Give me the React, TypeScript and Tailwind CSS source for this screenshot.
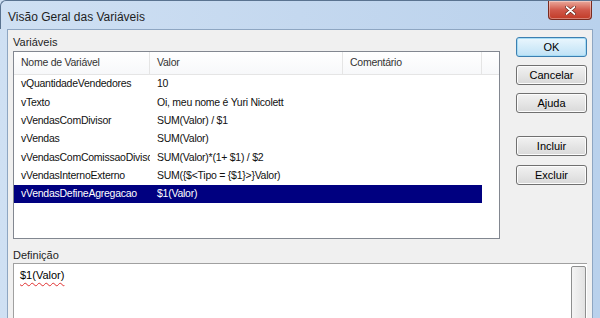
import React from "react";

const rows = [
  { name: "vQuantidadeVendedores", value: "10" },
  { name: "vTexto", value: "Oi, meu nome é Yuri Nicolett" },
  { name: "vVendasComDivisor", value: "SUM(Valor) / $1" },
  { name: "vVendas", value: "SUM(Valor)" },
  { name: "vVendasComComissaoDivisor", value: "SUM(Valor)*(1+ $1) / $2" },
  { name: "vVendasInternoExterno", value: "SUM({$<Tipo = {$1}>}Valor)" },
  { name: "vVendasDefineAgregacao", value: "$1(Valor)", selected: true },
];

function WinButton({ label, isDefault }: { label: string; isDefault?: boolean }) {
  return (
    <button
      type="button"
      className={
        isDefault
          ? "h-[20px] w-[71px] rounded-[3px] border border-[#3c7fb1] bg-gradient-to-b from-[#eaf6fd] to-[#bfe2f6] text-[11px] text-black shadow-[inset_0_0_0_1px_#a6dcf5]"
          : "h-[20px] w-[71px] rounded-[3px] border border-[#707070] bg-gradient-to-b from-[#f2f2f2] to-[#d9d9d9] text-[11px] text-black shadow-[inset_0_0_0_1px_#fcfcfc]"
      }
    >
      {label}
    </button>
  );
}

export default function App() {
  return (
    <div
      className="relative h-[318px] w-[600px] overflow-hidden bg-gradient-to-r from-[#cfe0f3] via-[#c4d8ef] to-[#b9d1ec]"
      style={{ fontFamily: '"Liberation Sans", Arial, sans-serif' }}
    >
      {/* title bar */}
      <div className="flex h-[29px] items-start justify-between pl-[7px] pr-[8px] rounded-tl-[6px] border-l border-t border-[#5a7390]">
        <div className="pt-[7px] text-[12px] text-[#1e1e1e]">Visão Geral das Variáveis</div>
        <div className="flex h-[19px] w-[44px] items-center justify-center rounded-b-[4px] border border-t-0 border-[#7a2a1e] bg-gradient-to-b from-[#e9a99c] via-[#d0584a] to-[#c13a26] shadow-[inset_0_0_0_1px_rgba(255,255,255,0.35)]">
          <svg width="11" height="9" viewBox="0 0 11 9">
            <path d="M1.5 1 L9.5 8 M9.5 1 L1.5 8" stroke="#5a1a10" strokeWidth="3" strokeLinecap="round" />
            <path d="M1.5 1 L9.5 8 M9.5 1 L1.5 8" stroke="#ffffff" strokeWidth="1.8" strokeLinecap="round" />
          </svg>
        </div>
      </div>

      {/* client area */}
      <div className="ml-[7px] mr-[7px] h-[289px] border-l border-r border-t border-[#8ea6c2] bg-[#f0f0f0] pl-[5px] text-[11px] text-black">
        <div className="flex">
          <div className="flex w-[487px] flex-col">
            <div className="h-[21px] pt-[6px] leading-[13px] text-[#1e1e1e]">Variáveis</div>
            <div className="h-[188px] border border-[#828790] bg-white text-[10.5px] tracking-[-0.25px]">
              <div className="flex h-[23px] border-b border-[#e5e5e5] bg-gradient-to-b from-white to-[#f7f8fa] text-[#333]">
                <div className="flex w-[136px] items-center border-r border-[#e5e5e5] pl-[7px]">Nome de Variável</div>
                <div className="flex w-[193px] items-center border-r border-[#e5e5e5] pl-[7px]">Valor</div>
                <div className="flex w-[139px] items-center border-r border-[#e5e5e5] pl-[7px]">Comentário</div>
                <div className="flex-1" />
              </div>
              {rows.map((r) => (
                <div
                  key={r.name}
                  className={
                    r.selected
                      ? "flex h-[18.33px] w-[468px] items-center bg-[#000080] text-white"
                      : "flex h-[18.33px] w-[468px] items-center text-[#111]"
                  }
                >
                  <div className="w-[136px] overflow-hidden whitespace-nowrap pl-[7px]">{r.name}</div>
                  <div className="w-[193px] overflow-hidden whitespace-nowrap pl-[7px]">{r.value}</div>
                  <div className="flex-1" />
                </div>
              ))}
            </div>
          </div>
          <div className="ml-[16px] flex flex-col pt-[7px]">
            <WinButton label="OK" isDefault />
            <div className="h-[8px]" />
            <WinButton label="Cancelar" />
            <div className="h-[8px]" />
            <WinButton label="Ajuda" />
            <div className="h-[23px]" />
            <WinButton label="Incluir" />
            <div className="h-[9px]" />
            <WinButton label="Excluir" />
          </div>
        </div>

        <div className="h-[24px] pt-[10px] leading-[13px] text-[#1e1e1e]">Definição</div>
        <div className="flex h-[60px] w-[574px] border-l border-t border-[#a0a0a0] bg-white">
          <div className="flex-1 pl-[6px] pt-[3px]">
            <span className="underline decoration-wavy decoration-[#e03030] decoration-1 underline-offset-[3px]">$1(Valor)</span>
          </div>
          <div className="flex w-[17px] justify-center pt-[2px]">
            <div className="h-[60px] w-[15px] rounded-[2px] border border-[#8e8f8f] bg-gradient-to-r from-[#f4f4f4] to-[#e2e2e2]" />
          </div>
        </div>
      </div>
    </div>
  );
}
